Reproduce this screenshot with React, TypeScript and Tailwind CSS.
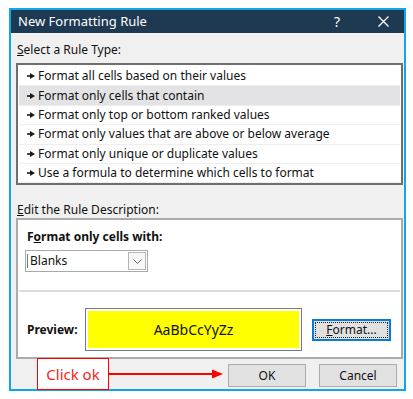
const rules = [
  "Format all cells based on their values",
  "Format only cells that contain",
  "Format only top or bottom ranked values",
  "Format only values that are above or below average",
  "Format only unique or duplicate values",
  "Use a formula to determine which cells to format",
];

const Pointer = () => (
  <svg width="8" height="6" viewBox="0 0 8 6" className="shrink-0">
    <path d="M0 3h3.5" stroke="#1a1a1a" strokeWidth="1.6" />
    <path d="M3 0L8 3L3 6Z" fill="#1a1a1a" />
  </svg>
);

export default function App() {
  return (
    <div className="w-[413px] h-[399px] bg-white pt-[8px] pl-[9px] font-['Noto_Sans',Arial,sans-serif] text-[12px] text-[#111]">
      <div className="relative w-[397px] h-[383px] border-2 border-[#10a6e8] bg-[#f0f0f0] flex flex-col">
        {/* title bar */}
        <div className="h-[23px] bg-[#1e3a53] flex items-center pl-[7px] text-white">
          <span className="text-[13px] leading-none">New Formatting Rule</span>
          <span className="ml-auto text-[14px] leading-none mr-[38px]">?</span>
          <svg width="11" height="11" viewBox="0 0 11 11" className="mr-[15px]">
            <path d="M0.5 0.5L10.5 10.5M10.5 0.5L0.5 10.5" stroke="white" strokeWidth="1.3" />
          </svg>
        </div>

        <div className="flex flex-col pl-[5px] pr-[1px]">
          <div className="mt-[9px] h-[16px] leading-[16px] pl-[1px]">
            <span className="underline">S</span>elect a Rule Type:
          </div>

          {/* rule list */}
          <div className="mt-[5px] h-[122px] border-2 border-[#6f6f6f] bg-white px-[1px] pt-[2px]">
            {rules.map((r, i) => (
              <div
                key={r}
                className={`h-[19.4px] flex items-center gap-[3px] pl-[8px] border-b border-[#eeeeee] ${
                  i === 1 ? "bg-[#e3e3e6]" : ""
                }`}
              >
                <Pointer />
                <span>{r}</span>
              </div>
            ))}
          </div>

          <div className="mt-[17px] h-[16px] leading-[16px] pl-[1px]">
            <span className="underline">E</span>dit the Rule Description:
          </div>

          {/* description box */}
          <div className="h-[141px] border-2 border-[#ababab] bg-white flex flex-col">
            <div className="mt-[9px] h-[16px] leading-[16px] pl-[9px] font-bold">
              F<span className="underline">o</span>rmat only cells with:
            </div>
            <div className="mt-[5px] ml-[7px] w-[123px] h-[22px] border border-[#a9a9a9] flex items-center">
              <div className="w-[1px] h-[14px] bg-[#4a7fc0] ml-[1px]" />
              <span className="ml-[2px]">Blanks</span>
              <div className="ml-auto mr-[1px] w-[18px] h-[18px] border border-[#b5b5b5] bg-[#f7f7f7] flex items-center justify-center">
                <svg width="9" height="5" viewBox="0 0 9 5">
                  <path d="M0.5 0.5L4.5 4.5L8.5 0.5" stroke="#606060" strokeWidth="1" fill="none" />
                </svg>
              </div>
            </div>
            <div className="mt-[18px] mx-[1px] h-[2px] bg-[#dcdcdc]" />
            <div className="mt-[16px] flex items-center pl-[9px]">
              <span className="font-bold w-[58px]">Preview:</span>
              <div className="w-[217px] h-[43px] border border-[#7a7a7a] p-[2px]">
                <div className="h-full bg-[#ffff00] flex items-center justify-center text-[14px]">
                  AaBbCcYyZz
                </div>
              </div>
              <div className="ml-[10px] w-[79px] h-[22px] border-2 border-[#0a78d7] bg-[#e1e1e1] p-[1px]">
                <div className="h-full border border-dotted border-[#222] flex items-center justify-center">
                  <span>
                    <span className="underline">F</span>ormat...
                  </span>
                </div>
              </div>
            </div>
          </div>

          {/* buttons */}
          <div className="mt-[5px] flex justify-end gap-[13px] pr-[6px]">
            <div className="w-[78px] h-[23px] border border-[#adadad] bg-[#e1e1e1] flex items-center justify-center">
              OK
            </div>
            <div className="w-[78px] h-[23px] border border-[#adadad] bg-[#e1e1e1] flex items-center justify-center">
              Cancel
            </div>
          </div>
        </div>

        {/* annotation callout */}
        <div className="absolute left-[26px] top-[348px] flex items-center">
          <div className="w-[72px] h-[32px] border-[1.5px] border-[#ff0000] bg-white flex items-center justify-center text-[15px] text-[#ff1a1a]">
            Click ok
          </div>
          <svg width="116" height="12" viewBox="0 0 116 12" className="-ml-[1px]">
            <path d="M0 6H106" stroke="#ff0000" strokeWidth="2" />
            <path d="M104 1.5L115 6L104 10.5Z" fill="#ff0000" />
          </svg>
        </div>
      </div>
    </div>
  );
}
